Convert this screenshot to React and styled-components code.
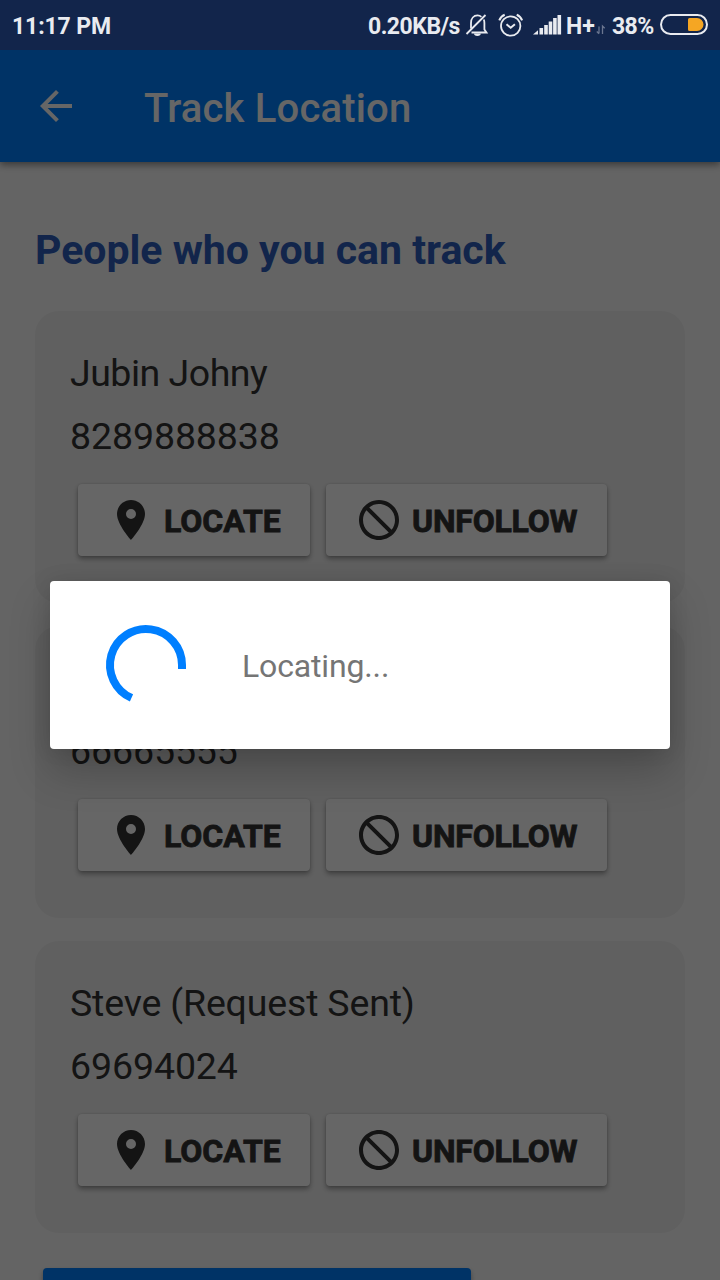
import React from 'react';
import styled, { createGlobalStyle } from 'styled-components';

const GlobalStyle = createGlobalStyle`
  * { box-sizing: border-box; }
  body { margin: 0; overflow: hidden; }
`;

const Screen = styled.div`
  position: relative;
  display: flex;
  flex-direction: column;
  width: 720px;
  height: 1280px;
  overflow: hidden;
  background: #fafafa;
  font-family: Roboto, sans-serif;
  color: #333;
`;

const StatusBar = styled.header`
  position: relative;
  z-index: 2;
  flex: none;
  display: flex;
  align-items: center;
  justify-content: space-between;
  height: 50px;
  padding: 3px 12px 0;
  background: #12254b;
  color: #e9ebf0;
  font-size: 23px;
  font-weight: 700;
  line-height: 28px;
  white-space: nowrap;
`;

const StatusGroup = styled.div`
  display: flex;
  align-items: center;
  height: 47px;
`;

const StatusText = styled.span`
  width: ${(p) => p.$width}px;
  letter-spacing: ${(p) => p.$tracking || 0}px;
`;

const StatusIcons = styled.svg`
  flex: none;
  display: block;
  margin-top: -3px;
`;

const AppBar = styled.div`
  position: relative;
  flex: none;
  display: flex;
  align-items: center;
  gap: 64px;
  height: 112px;
  padding-left: 32px;
  background: #007fff;
  box-shadow: 0 3px 7px rgba(0, 0, 0, 0.42);
  color: #fff;
`;

const Icon = styled.svg`
  flex: none;
  display: block;
  width: 48px;
  height: 48px;
  fill: currentColor;
`;

const Title = styled.h1`
  margin: 0;
  padding-top: 5px;
  font-size: 40px;
  font-weight: 500;
  line-height: 48px;
  letter-spacing: 0.18px;
`;

const Content = styled.main`
  flex: 1;
  min-height: 0;
  display: flex;
  flex-direction: column;
  padding: 63px 35px 0;
`;

const Heading = styled.h2`
  flex: none;
  margin: 0 0 36px;
  font-size: 41px;
  font-weight: 700;
  line-height: 50px;
  color: #2d5dbc;
  white-space: nowrap;
`;

const CardList = styled.div`
  flex: none;
  display: flex;
  flex-direction: column;
  gap: 23px;
`;

const Card = styled.section`
  height: 292px;
  padding: 31px 35px 0;
  border-radius: 24px;
  background: #f0f0f0;
`;

const CardLine = styled.div`
  height: 63px;
  font-size: 37.5px;
  line-height: 63px;
  letter-spacing: ${(p) => p.$tracking || 0}px;
  white-space: nowrap;
`;

const Actions = styled.div`
  display: flex;
  gap: 16px;
  padding: 16px 8px 0;
`;

const ActionButton = styled.button`
  display: flex;
  align-items: center;
  gap: 9px;
  width: ${(p) => p.$width}px;
  height: 72px;
  padding: 0 0 0 29px;
  border: 0;
  border-radius: 4px;
  background: #fff;
  box-shadow: 0 3px 5px rgba(0, 0, 0, 0.35), 0 0 2px rgba(0, 0, 0, 0.15);
  color: #333;
  font: 700 32px/40px Roboto, sans-serif;
`;

const ButtonText = styled.span`
  padding-top: 2px;
  letter-spacing: ${(p) => p.$tracking || 0}px;
  -webkit-text-stroke: 0.8px currentColor;
`;

const PrimaryButton = styled.button`
  flex: none;
  width: 428px;
  height: 72px;
  margin: 35px 0 0 8px;
  border: 0;
  border-radius: 4px;
  background: #007fff;
  box-shadow: 0 3px 5px rgba(0, 0, 0, 0.35);
`;

const Scrim = styled.div`
  position: absolute;
  inset: 0;
  z-index: 1;
  display: flex;
  padding: 581px 50px 0;
  background: rgba(0, 0, 0, 0.6);
`;

const Dialog = styled.div`
  display: flex;
  align-items: center;
  gap: 48px;
  width: 620px;
  height: 168px;
  padding-left: 48px;
  border-radius: 4px;
  background: #fff;
  box-shadow: 0 22px 40px rgba(0, 0, 0, 0.22), 0 0 20px rgba(0, 0, 0, 0.1);
  color: #757575;
  font-size: 32px;
  line-height: 40px;
  letter-spacing: -0.15px;
`;

const DialogText = styled.span`
  padding-top: 2px;
`;

const BackIcon = () => (
  <Icon viewBox="0 0 24 24">
    <path d="M20 11H7.83l5.59-5.59L12 4l-8 8 8 8 1.41-1.41L7.83 13H20v-2z" />
  </Icon>
);

const PinIcon = () => (
  <Icon viewBox="0 0 24 24">
    <path d="M12 2C8.13 2 5 5.13 5 9c0 5.25 7 13 7 13s7-7.75 7-13c0-3.87-3.13-7-7-7zm0 9.5a2.5 2.5 0 0 1 0-5 2.5 2.5 0 0 1 0 5z" />
  </Icon>
);

const BlockIcon = () => (
  <Icon viewBox="0 0 24 24">
    <path d="M12 2C6.48 2 2 6.48 2 12s4.48 10 10 10 10-4.48 10-10S17.52 2 12 2zM4 12c0-1.85.63-3.55 1.69-4.9L16.9 18.31A7.902 7.902 0 0 1 12 20c-4.42 0-8-3.58-8-8zm14.31 4.9L7.1 5.69A7.902 7.902 0 0 1 12 4c4.42 0 8 3.58 8 8 0 1.85-.63 3.55-1.69 4.9z" />
  </Icon>
);

const AlertIcons = () => (
  <StatusIcons width="104" height="50" viewBox="462 0 104 50" fill="none" stroke="#e9ebf0" strokeWidth="1.8">
    <path d="M471 28.5V23c0-4.5 2.7-7.6 6.5-7.6 1.5 0 2.9.5 3.9 1.4M483.8 19.5c.4 1 .6 2.2.6 3.5v6.5l2.1 3H471.5" />
    <path d="M466.5 34 485.5 15" />
    <path d="M474 33.5a3.4 2.4 0 0 0 6.8 0z" fill="#e9ebf0" stroke="none" />
    <circle cx="510.7" cy="26" r="9.7" />
    <path d="m506.5 24.2 4.2 3.6 4.2-3.6" strokeWidth="2" />
    <path d="M499.3 20.3c.9-2.6 2.8-4.6 5.4-5.6M522.1 20.3c-.9-2.6-2.8-4.6-5.4-5.6" strokeWidth="2" />
    <g fill="#e9ebf0" stroke="none">
      <path d="M533 34.5 538 30.2v4.300z" />
      <rect x="539.500" y="28" width="3.600" height="6.500" />
      <rect x="544.200" y="25" width="3.600" height="9.500" />
      <rect x="548.700" y="21.500" width="3.600" height="13" />
      <rect x="553.100" y="18" width="3.600" height="16.500" />
      <rect x="557.500" y="15" width="3.600" height="19.500" />
    </g>
  </StatusIcons>
);

const TrafficIcon = () => (
  <StatusIcons width="18" height="50" viewBox="594 0 18 50" fill="none" stroke="#6b7690" strokeWidth="1.3">
    <path d="M599 26.5v7M596.8 31.5l2.2 2.2M602.5 34v-8l2.2 2.2" />
  </StatusIcons>
);

const BatteryIcon = () => (
  <StatusIcons width="48" height="50" viewBox="660 0 48 50">
    <rect x="661" y="15" width="46" height="19" rx="9.5" fill="none" stroke="#e9ebf0" strokeWidth="2" />
    <path d="M689.5 18H697a6.5 6.5 0 0 1 0 13h-7.5a1.5 1.5 0 0 1-1.5-1.5v-10a1.5 1.5 0 0 1 1.5-1.5z" fill="#f5a623" />
  </StatusIcons>
);

const Spinner = () => (
  <svg width="96" height="96" viewBox="0 0 96 96" fill="none" stroke="#007fff" strokeWidth="8">
    <path d="M84 52V48A36 36 0 1 0 33.5 80.95" />
  </svg>
);

const PersonCard = ({ name, phone, nameTracking }) => (
  <Card>
    <CardLine $tracking={nameTracking}>{name}</CardLine>
    <CardLine $tracking={-0.1}>{phone}</CardLine>
    <Actions>
      <ActionButton $width={232}>
        <PinIcon />
        <ButtonText>LOCATE</ButtonText>
      </ActionButton>
      <ActionButton $width={281}>
        <BlockIcon />
        <ButtonText $tracking={-0.2}>UNFOLLOW</ButtonText>
      </ActionButton>
    </Actions>
  </Card>
);

const people = [
  { name: 'Jubin Johny', phone: '8289888838', nameTracking: -0.5 },
  { name: '', phone: '66665555', nameTracking: 0 },
  { name: 'Steve (Request Sent)', phone: '69694024', nameTracking: -0.17 },
];

export default function App() {
  return (
    <Screen>
      <GlobalStyle />
      <StatusBar>
        <StatusText $tracking={-0.12}>11:17 PM</StatusText>
        <StatusGroup>
          <StatusText $width={94} $tracking={-0.5}>0.20KB/s</StatusText>
          <AlertIcons />
          <StatusText $width={28}>H+</StatusText>
          <TrafficIcon />
          <StatusText $width={48} $tracking={-0.6}>38%</StatusText>
          <BatteryIcon />
        </StatusGroup>
      </StatusBar>
      <AppBar>
        <BackIcon />
        <Title>Track Location</Title>
      </AppBar>
      <Content>
        <Heading>People who you can track</Heading>
        <CardList>
          {people.map((person) => (
            <PersonCard key={person.phone} {...person} />
          ))}
        </CardList>
        <PrimaryButton />
      </Content>
      <Scrim>
        <Dialog>
          <Spinner />
          <DialogText>Locating...</DialogText>
        </Dialog>
      </Scrim>
    </Screen>
  );
}
